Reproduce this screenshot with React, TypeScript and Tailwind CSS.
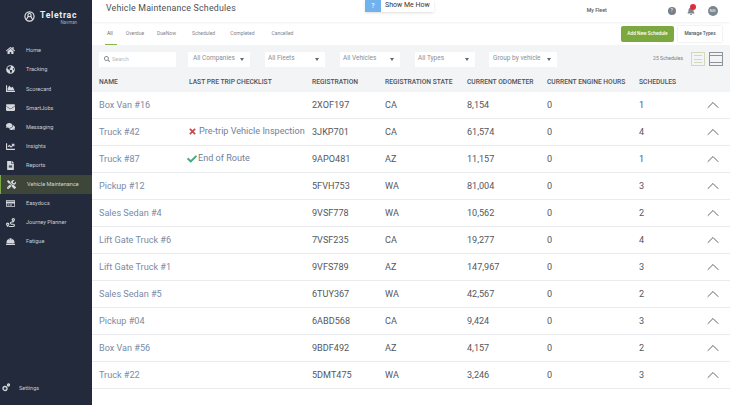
import React from "react";
import { FaHome, FaGlobeAmericas, FaChartArea, FaEnvelope, FaComments, FaChartLine, FaFileAlt, FaTools, FaRegCreditCard, FaRoute, FaHardHat, FaSearch, FaTimes, FaCheck, FaBell } from "react-icons/fa";
import { ChevronUp } from "lucide-react";

const nav = [
  { label: "Home", Icon: FaHome },
  { label: "Tracking", Icon: FaGlobeAmericas },
  { label: "Scorecard", Icon: FaChartArea },
  { label: "SmartJobs", Icon: FaEnvelope },
  { label: "Messaging", Icon: FaComments },
  { label: "Insights", Icon: FaChartLine },
  { label: "Reports", Icon: FaFileAlt },
  { label: "Vehicle Maintenance", Icon: FaTools, active: true },
  { label: "Easydocs", Icon: FaRegCreditCard },
  { label: "Journey Planner", Icon: FaRoute },
  { label: "Fatigue", Icon: FaHardHat },
];

const rows = [
  ["Box Van #16", "", "2XOF197", "CA", "8,154", "0", "1"],
  ["Truck #42", "x", "3JKP701", "CA", "61,574", "0", "4"],
  ["Truck #87", "c", "9APO481", "AZ", "11,157", "0", "1"],
  ["Pickup #12", "", "5FVH753", "WA", "81,004", "0", "3"],
  ["Sales Sedan #4", "", "9VSF778", "WA", "10,562", "0", "2"],
  ["Lift Gate Truck #6", "", "7VSF235", "CA", "19,277", "0", "4"],
  ["Lift Gate Truck #1", "", "9VFS789", "AZ", "147,967", "0", "3"],
  ["Sales Sedan #5", "", "6TUY367", "WA", "42,567", "0", "2"],
  ["Pickup #04", "", "6ABD568", "CA", "9,424", "0", "3"],
  ["Box Van #56", "", "9BDF492", "AZ", "4,157", "0", "2"],
  ["Truck #22", "", "5DMT475", "WA", "3,246", "0", "3"],
];

const cols = "grid grid-cols-[90px_123px_73px_82px_80px_92px_60px_1fr] items-center";

function Caret() {
  return <i className="w-0 h-0 border-x-[2.5px] border-x-transparent border-t-[3px] border-t-[#666]" />;
}

function Filter({ label, w, pl }: { label: string; w: string; pl: string }) {
  return (
    <div className={`${w} ${pl} h-[15px] bg-white flex items-center justify-between pr-[6px] text-[6.5px] text-[#8a8f98] whitespace-nowrap`}>
      <span>{label}</span>
      <Caret />
    </div>
  );
}

export default function App() {
  return (
    <div className="w-[730px] h-[405px] overflow-hidden flex bg-white font-['Roboto',sans-serif]">
      <aside className="w-[92px] h-full shrink-0 bg-[#222a3c] flex flex-col text-[#c9ccd3]">
        <div className="h-[41px] flex items-start pt-[10px] pl-[24px] gap-[5px]">
          <svg width="11" height="11" viewBox="0 0 24 24" fill="none" stroke="#e8e8e8" strokeWidth="2.5" className="mt-[1px] shrink-0">
            <circle cx="12" cy="12" r="10" />
            <circle cx="12" cy="9" r="3.5" />
            <path d="M5 19l4-7M19 19l-4-7" />
          </svg>
          <div className="flex flex-col items-end">
            <span className="text-[8.6px] leading-[10px] font-bold tracking-[0.7px] text-[#eceef0]">Teletrac</span>
            <span className="text-[4.5px] leading-[6px] text-[#a6abb5]">Navman</span>
          </div>
        </div>
        <nav className="flex flex-col">
          {nav.map(({ label, Icon, active }) => (
            <div
              key={label}
              className={`h-[19.1px] flex items-center gap-[11px] text-[5.6px] ${active ? "pl-[6px] bg-[#3d4638] border-l border-[#7ca845] text-[#d3d6cf]" : "pl-[6px]"}`}
            >
              <Icon size={9} className="shrink-0 text-[#d5d8dd]" />
              <span className="whitespace-nowrap">{label}</span>
            </div>
          ))}
        </nav>
        <div className="mt-auto h-[22px] flex items-start pl-[2px] gap-[9px] text-[5.5px]">
          <svg width="8" height="9" viewBox="0 0 16 18" className="shrink-0 text-[#d5d8dd]" fill="none" stroke="currentColor" strokeWidth="2.6">
            <circle cx="6" cy="11" r="4" />
            <circle cx="13" cy="4" r="2" />
          </svg>
          <span className="mt-[0.5px]">Settings</span>
        </div>
      </aside>

      <main className="flex-1 min-w-0 flex flex-col">
        <header className="h-[22px] flex items-center pl-[14px] shadow-[0_1px_2px_rgba(0,0,0,0.06)] relative z-10">
          <h1 className="w-[259px] shrink-0 text-[8.8px] tracking-[0.2px] text-[#4b4f57] pb-[5px] whitespace-nowrap">Vehicle Maintenance Schedules</h1>
          <div className="self-start h-[12px] flex items-center bg-white shadow-sm text-[7px] text-[#33363b]">
            <span className="w-[16px] h-[12px] bg-[#6fb2ee] text-white flex items-center justify-center">?</span>
            <span className="px-[4px] pb-[1px] whitespace-nowrap">Show Me How</span>
          </div>
          <span className="ml-[153px] text-[5.2px] font-medium text-[#555] whitespace-nowrap">My Fleet</span>
          <div className="ml-[61px] flex items-center">
            <span className="w-[8px] h-[8px] rounded-full bg-[#777f88] text-white text-[5px] flex items-center justify-center">?</span>
            <span className="relative ml-[11px]">
              <FaBell size={8} className="text-[#7e868e]" />
              <span className="absolute -top-[3px] left-[3px] w-[6px] h-[6px] rounded-full bg-[#dc2f3e]" />
            </span>
            <span className="ml-[13px] w-[10px] h-[10px] rounded-full bg-[#7d858d] text-white text-[4px] flex items-center justify-center">NG</span>
          </div>
        </header>

        <div className="h-[23px] flex items-center pl-[15px] pr-[8px] text-[5px] text-[#7f848c]">
          <span className="relative h-full flex items-center text-[#5d6268] after:content-[''] after:absolute after:-left-[2px] after:w-[12px] after:bottom-0 after:h-px after:bg-[#8cb34f]">All</span>
          <span className="ml-[13px]">Overdue</span>
          <span className="ml-[13px]">DueNow</span>
          <span className="ml-[16px]">Scheduled</span>
          <span className="ml-[15px]">Completed</span>
          <span className="ml-[17px]">Cancelled</span>
          <div className="ml-auto flex items-center gap-[4px]">
            <div className="w-[53px] h-[16px] rounded-[2px] bg-[#7ba93f] text-white text-[4.8px] font-medium flex items-center justify-center">Add New Schedule</div>
            <div className="w-[44px] h-[16px] bg-white shadow-[0_0_2px_rgba(0,0,0,0.15)] text-[#555] text-[4.8px] font-medium flex items-center justify-center">Manage Types</div>
          </div>
        </div>

        <div className="h-[27px] bg-[#f3f4f5] flex items-center pt-[1px] pl-[7px] pr-[7px] text-[#9aa0a8]">
          <div className="w-[77px] h-[15px] bg-white flex items-center gap-[2px] pl-[5px] text-[5.5px] text-[#b5b9bf] mr-[12px]">
            <FaSearch size={6} className="text-[#858b93]" />
            <span>Search</span>
          </div>
          <div className="flex items-center gap-[15px]">
            <Filter label="All Companies" w="w-[62px]" pl="pl-[5px]" />
            <Filter label="All Fleets" w="w-[60px]" pl="pl-[3px]" />
            <Filter label="All Vehicles" w="w-[60px]" pl="pl-[3px]" />
            <Filter label="All Types" w="w-[60px]" pl="pl-[3px]" />
            <Filter label="Group by vehicle" w="w-[68px] -ml-px" pl="pl-[4px]" />
          </div>
          <span className="ml-auto text-[5px] text-[#777c84] mr-[8px] whitespace-nowrap">25 Schedules</span>
          <div className="w-[14px] h-[14px] border border-[#d5d8b8] flex flex-col justify-center gap-[2.5px] px-[2px] mr-[4px]">
            <i className="h-px bg-[#d5d8b8]" />
            <i className="h-px bg-[#d5d8b8]" />
            <i className="h-px bg-[#d5d8b8]" />
          </div>
          <div className="w-[14px] h-[14px] border border-[#8f9296] flex flex-col justify-between pt-[2px] pb-[2px]">
            <i className="h-px bg-[#8f9296]" />
            <i className="h-px bg-[#8f9296]" />
          </div>
        </div>

        <div className={`${cols} h-[20px] bg-[#f3f4f5] pl-[7px] pt-[1px] text-[6.7px] font-medium text-[#4e535a] whitespace-nowrap`}>
          <span>NAME</span>
          <span>LAST PRE TRIP CHECKLIST</span>
          <span>REGISTRATION</span>
          <span>REGISTRATION STATE</span>
          <span>CURRENT ODOMETER</span>
          <span>CURRENT ENGINE HOURS</span>
          <span>SCHEDULES</span>
          <span />
        </div>

        <div className="flex flex-col">
          {rows.map((r) => (
            <div key={r[2]} className={`${cols} h-[27px] pl-[7px] pt-[2px] border-b border-[#e9ebee] text-[9.1px] text-[#53575d]`}>
              <span className="text-[#7a8aa6]">{r[0]}</span>
              <span className="flex items-center pb-[2px] text-[#6f7f9a] whitespace-nowrap">
                {r[1] === "x" && <FaTimes size={9} className="text-[#c8474c] mr-[2px] -ml-[1px]" />}
                {r[1] === "x" && "Pre-trip Vehicle Inspection"}
                {r[1] === "c" && <FaCheck size={10} className="text-[#48a884] mr-[1px] -ml-[2px]" />}
                {r[1] === "c" && "End of Route"}
              </span>
              <span>{r[2]}</span>
              <span>{r[3]}</span>
              <span>{r[4]}</span>
              <span>{r[5]}</span>
              <span>{r[6]}</span>
              <span className="flex justify-end pr-[7px] -mt-[2px]"><ChevronUp size={20} strokeWidth={1.1} className="text-[#555]" /></span>
            </div>
          ))}
        </div>
      </main>
    </div>
  );
}
